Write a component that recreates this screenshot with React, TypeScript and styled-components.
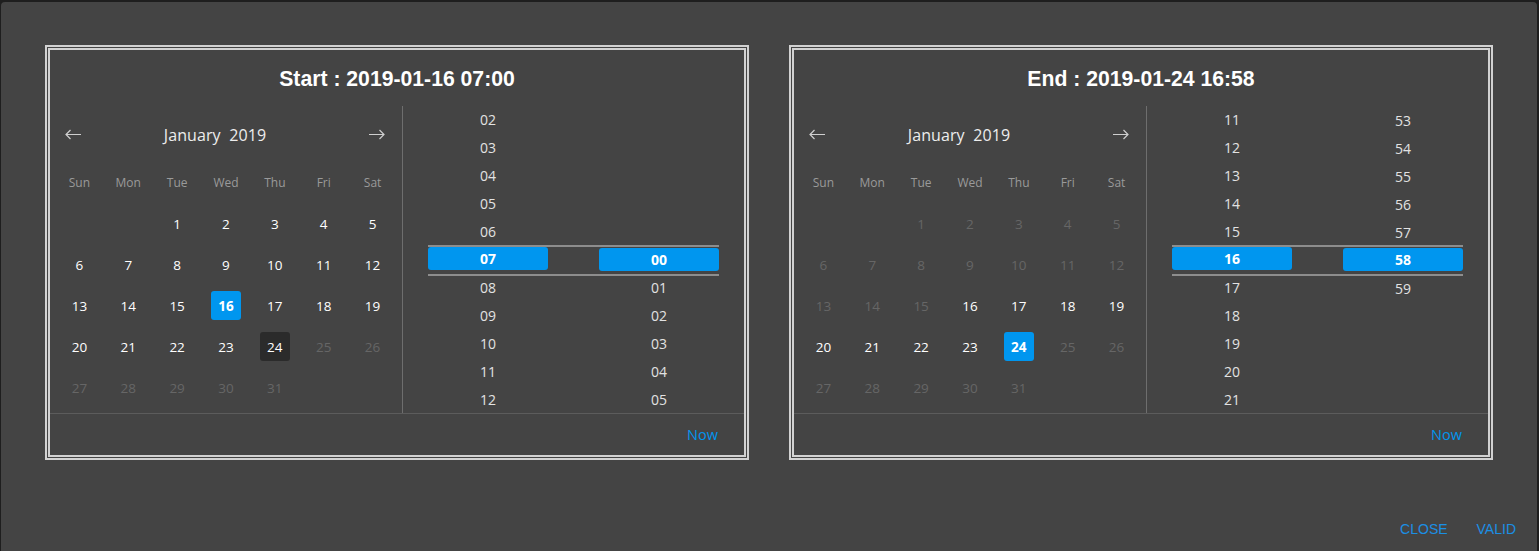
import React from "react";
import styled, { createGlobalStyle } from "styled-components";

const Global = createGlobalStyle`
  html, body { margin: 0; padding: 0; background: #1e1e1e; overflow: hidden; }
  body { font-family: "Open Sans", "Noto Sans", sans-serif; }
  * { box-sizing: border-box; }
`;

const BLUE = "#0096ef";

const Screen = styled.div`
  height: 551px;
  padding: 2px 2px 0 1px;
`;

const Dialog = styled.div`
  background: #444444;
  min-height: 560px;
  border-radius: 4px 4px 0 0;
  display: flex;
  flex-direction: column;
`;

const Panels = styled.div`
  display: flex;
  gap: 40px;
  padding: 43px 44px 0 44px;
`;

const Frame = styled.section`
  width: 704px;
  height: 415px;
  border: 5px double #d2d2d2;
  display: flex;
  flex-direction: column;
`;

const Title = styled.h2`
  margin: 0;
  height: 56px;
  padding-top: 1px;
  display: flex;
  align-items: center;
  justify-content: center;
  font-family: "Liberation Sans", Arial, sans-serif;
  font-weight: 700;
  font-size: 21.2px;
  color: #ffffff;
`;

const Body = styled.div`
  height: 307px;
  display: grid;
  grid-template-columns: 353px 1fr;
`;

const Calendar = styled.div`
  border-right: 1px solid #6e6e6e;
  padding: 0 5px;
  display: flex;
  flex-direction: column;
`;

const Header = styled.div`
  height: 56px;
  padding-top: 1px;
  display: flex;
  align-items: center;
  padding-right: 9px;
  padding-left: 6px;
`;

const ArrowButton = styled.button`
  width: 24px;
  height: 24px;
  padding: 0;
  border: none;
  background: none;
  display: flex;
  align-items: center;
  justify-content: center;
  color: #cfcfcf;
  cursor: pointer;
`;

const MonthLabel = styled.div`
  flex: 1;
  text-align: center;
  padding-right: 19px;
  font-size: 16px;
  color: #ededed;
  white-space: pre;
  letter-spacing: 0.1px;
`;

const WeekRow = styled.div`
  height: 41px;
  display: grid;
  grid-template-columns: repeat(7, 1fr);
  align-items: center;
`;

const WeekDay = styled.div`
  text-align: center;
  font-size: 12px;
  color: #9a9a9a;
`;

const DayGrid = styled.div`
  display: grid;
  grid-template-columns: repeat(7, 1fr);
  grid-auto-rows: 41px;
`;

const DayCell = styled.div`
  display: flex;
  align-items: center;
  justify-content: center;
`;

type DayKind = "normal" | "disabled" | "selected" | "marked";

const Day = styled.div<{ $kind: DayKind }>`
  width: 30px;
  height: 29px;
  border-radius: 3px;
  display: flex;
  align-items: center;
  justify-content: center;
  font-size: 13.5px;
  font-weight: ${(p) => (p.$kind === "selected" ? 700 : 500)};
  color: ${(p) => (p.$kind === "disabled" ? "#666666" : "#ffffff")};
  background: ${(p) =>
    p.$kind === "selected" ? BLUE : p.$kind === "marked" ? "#2b2b2b" : "transparent"};
`;

const TimePane = styled.div`
  position: relative;
  overflow: hidden;
  display: flex;
  justify-content: space-between;
  padding: 0 25px;
`;

const Band = styled.div`
  position: absolute;
  left: 25px;
  right: 25px;
  top: 139px;
  height: 31px;
  border-top: 2px solid #8d8d8d;
  border-bottom: 2px solid #8d8d8d;
  pointer-events: none;
`;

const TimeColumn = styled.div<{ $lead: number }>`
  width: 120px;
  padding-top: ${(p) => p.$lead * 28}px;
  display: flex;
  flex-direction: column;
`;

const TimeCell = styled.div`
  height: 28px;
  display: flex;
  align-items: center;
  justify-content: center;
`;

const TimeText = styled.span<{ $selected?: boolean }>`
  width: ${(p) => (p.$selected ? "100%" : "auto")};
  height: 23px;
  margin-top: ${(p) => (p.$selected ? "-1px" : "0")};
  border-radius: 3px;
  display: flex;
  align-items: center;
  justify-content: center;
  font-size: 14px;
  font-weight: ${(p) => (p.$selected ? 700 : 400)};
  color: ${(p) => (p.$selected ? "#ffffff" : "#e2e2e2")};
  background: ${(p) => (p.$selected ? BLUE : "transparent")};
`;

const Footer = styled.div`
  height: 42px;
  border-top: 1px solid #5c5c5c;
  display: flex;
  align-items: center;
  justify-content: flex-end;
  padding-right: 26px;
`;

const NowButton = styled.button`
  border: none;
  background: none;
  padding: 0;
  font-family: "Open Sans", sans-serif;
  font-size: 14.5px;
  font-weight: 500;
  color: ${BLUE};
  cursor: pointer;
`;

const Actions = styled.div`
  display: flex;
  justify-content: flex-end;
  gap: 13px;
  padding: 51px 13px 8px;
`;

const ActionButton = styled.button`
  border: none;
  background: none;
  padding: 6px 8px;
  line-height: 24px;
  font-family: "Liberation Sans", Arial, sans-serif;
  font-size: 14px;
  text-transform: uppercase;
  color: #1b8fe4;
  cursor: pointer;
`;

const Arrow = ({ dir }: { dir: "left" | "right" }) => (
  <svg width="17" height="11" viewBox="0 0 17 11" fill="none" stroke="currentColor" strokeWidth="1.2">
    {dir === "left" ? (
      <path d="M1 5.5H16M5.5 1L1 5.5L5.5 10" />
    ) : (
      <path d="M1 5.5H16M11.5 1L16 5.5L11.5 10" />
    )}
  </svg>
);

const WEEK = ["Sun", "Mon", "Tue", "Wed", "Thu", "Fri", "Sat"];
const pad = (n: number) => String(n).padStart(2, "0");

type PanelProps = {
  title: string;
  selected: number;
  marked?: number;
  min: number;
  max: number;
  hours: number[];
  hourLead: number;
  hour: number;
  minutes: number[];
  minuteLead: number;
  minute: number;
};

const Panel = (p: PanelProps) => {
  const cells: (number | null)[] = [null, null];
  for (let d = 1; d <= 31; d++) cells.push(d);
  const kind = (d: number): DayKind => {
    if (d === p.selected) return "selected";
    if (d === p.marked) return "marked";
    if (d < p.min || d > p.max) return "disabled";
    return "normal";
  };
  return (
    <Frame>
      <Title>{p.title}</Title>
      <Body>
        <Calendar>
          <Header>
            <ArrowButton aria-label="previous month">
              <Arrow dir="left" />
            </ArrowButton>
            <MonthLabel>{"January  2019"}</MonthLabel>
            <ArrowButton aria-label="next month">
              <Arrow dir="right" />
            </ArrowButton>
          </Header>
          <WeekRow>
            {WEEK.map((w) => (
              <WeekDay key={w}>{w}</WeekDay>
            ))}
          </WeekRow>
          <DayGrid>
            {cells.map((d, i) => (
              <DayCell key={i}>{d !== null && <Day $kind={kind(d)}>{d}</Day>}</DayCell>
            ))}
          </DayGrid>
        </Calendar>
        <TimePane>
          <Band />
          <TimeColumn $lead={p.hourLead}>
            {p.hours.map((h) => (
              <TimeCell key={h}>
                <TimeText $selected={h === p.hour}>{pad(h)}</TimeText>
              </TimeCell>
            ))}
          </TimeColumn>
          <TimeColumn $lead={p.minuteLead}>
            {p.minutes.map((m) => (
              <TimeCell key={m}>
                <TimeText $selected={m === p.minute}>{pad(m)}</TimeText>
              </TimeCell>
            ))}
          </TimeColumn>
        </TimePane>
      </Body>
      <Footer>
        <NowButton>Now</NowButton>
      </Footer>
    </Frame>
  );
};

const range = (a: number, b: number) => Array.from({ length: b - a + 1 }, (_, i) => a + i);

export default function App() {
  return (
    <>
      <Global />
      <Screen>
        <Dialog>
          <Panels>
            <Panel
              title="Start : 2019-01-16 07:00"
              selected={16}
              marked={24}
              min={1}
              max={24}
              hours={range(2, 12)}
              hourLead={0}
              hour={7}
              minutes={range(0, 5)}
              minuteLead={5}
              minute={0}
            />
            <Panel
              title="End : 2019-01-24 16:58"
              selected={24}
              min={16}
              max={24}
              hours={range(11, 21)}
              hourLead={0}
              hour={16}
              minutes={range(53, 59)}
              minuteLead={0}
              minute={58}
            />
          </Panels>
          <Actions>
            <ActionButton>Close</ActionButton>
            <ActionButton>Valid</ActionButton>
          </Actions>
        </Dialog>
      </Screen>
    </>
  );
}
